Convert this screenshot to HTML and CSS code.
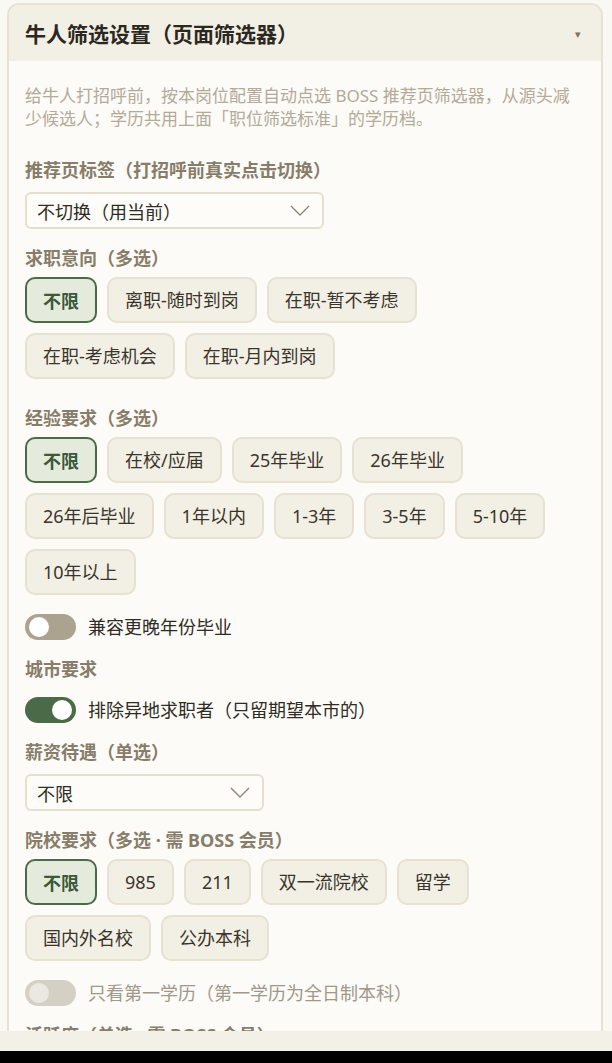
FILE: index.html
```html
<!DOCTYPE html>
<html lang="zh-CN">
<head>
<meta charset="utf-8">
<title>牛人筛选设置</title>
<link rel="stylesheet" href="styles.css">
</head>
<body>
<div class="panel">
  <div class="panel-head">
    <h2 class="panel-title">牛人筛选设置（页面筛选器）</h2>
    <span class="caret">▾</span>
  </div>
  <div class="panel-body">
    <p class="desc">给牛人打招呼前，按本岗位配置自动点选 BOSS 推荐页筛选器，从源头减少候选人；学历共用上面「职位筛选标准」的学历档。</p>

    <div class="field">
      <div class="label">推荐页标签（打招呼前真实点击切换）</div>
      <div class="select select-lg">
        <span>不切换（用当前）</span>
        <svg class="chev" viewBox="0 0 20 11" width="20" height="11"><polyline points="1,1 10,10 19,1" fill="none" stroke="#8d877b" stroke-width="1.4"/></svg>
      </div>
    </div>

    <div class="field">
      <div class="label">求职意向（多选）</div>
      <div class="chips">
        <span class="chip on">不限</span>
        <span class="chip">离职-随时到岗</span>
        <span class="chip">在职-暂不考虑</span>
        <span class="chip">在职-考虑机会</span>
        <span class="chip">在职-月内到岗</span>
      </div>
    </div>

    <div class="field">
      <div class="label">经验要求（多选）</div>
      <div class="chips">
        <span class="chip on">不限</span>
        <span class="chip">在校/应届</span>
        <span class="chip">25年毕业</span>
        <span class="chip">26年毕业</span>
        <span class="chip">26年后毕业</span>
        <span class="chip">1年以内</span>
        <span class="chip">1-3年</span>
        <span class="chip">3-5年</span>
        <span class="chip">5-10年</span>
        <span class="chip">10年以上</span>
      </div>
      <div class="toggle-row after-chips">
        <span class="toggle off"><span class="knob"></span></span>
        <span class="toggle-text">兼容更晚年份毕业</span>
      </div>
    </div>

    <div class="field">
      <div class="label">城市要求</div>
      <div class="toggle-row">
        <span class="toggle on"><span class="knob"></span></span>
        <span class="toggle-text">排除异地求职者（只留期望本市的）</span>
      </div>
    </div>

    <div class="field">
      <div class="label">薪资待遇（单选）</div>
      <div class="select select-sm">
        <span>不限</span>
        <svg class="chev" viewBox="0 0 20 11" width="20" height="11"><polyline points="1,1 10,10 19,1" fill="none" stroke="#8d877b" stroke-width="1.4"/></svg>
      </div>
    </div>

    <div class="field">
      <div class="label">院校要求（多选 · 需 BOSS 会员）</div>
      <div class="chips">
        <span class="chip on">不限</span>
        <span class="chip">985</span>
        <span class="chip">211</span>
        <span class="chip">双一流院校</span>
        <span class="chip">留学</span>
        <span class="chip">国内外名校</span>
        <span class="chip">公办本科</span>
      </div>
      <div class="toggle-row after-chips">
        <span class="toggle disabled"><span class="knob"></span></span>
        <span class="toggle-text muted">只看第一学历（第一学历为全日制本科）</span>
      </div>
    </div>

    <div class="field">
      <div class="label">活跃度（单选 · 需 BOSS 会员）</div>
      <div class="select select-sm">
        <span>不限</span>
        <svg class="chev" viewBox="0 0 20 11" width="20" height="11"><polyline points="1,1 10,10 19,1" fill="none" stroke="#8d877b" stroke-width="1.4"/></svg>
      </div>
    </div>
  </div>
</div>
<div class="footer-bar"><div class="footer-black"></div></div>
</body>
</html>
```

FILE: styles.css
```css
html, body {
  margin: 0;
  padding: 0;
}
body {
  background: #faf8f2;
  font-family: "Noto Sans", "Noto Sans CJK SC", sans-serif;
  color: #2f2b25;
  height: 1063px;
  overflow: hidden;
}
.panel {
  margin: 3px 9px 0 7px;
  border: 2px solid #e7e2d3;
  border-radius: 12px;
  background: #fcfbf7;
  overflow: hidden;
}
.panel-head {
  height: 56px;
  background: #f2efe4;
  display: flex;
  align-items: center;
  justify-content: space-between;
  padding: 0 20px 0 16px;
}
.panel-title {
  margin: 0;
  font-size: 21px;
  font-weight: 700;
  color: #2b2821;
  line-height: 28px;
  font-family: "Noto Sans CJK SC", sans-serif;
}
.caret {
  font-size: 11px;
  color: #7a7262;
  line-height: 1;
}
.panel-body {
  padding: 23px 16px 40px 16px;
  display: flex;
  flex-direction: column;
}
.desc {
  margin: 0 0 11px 0;
  font-size: 17px;
  line-height: 23px;
  color: #b3aa99;
}
.field {
  margin-top: 17px;
  display: flex;
  flex-direction: column;
  align-items: flex-start;
  padding-right: 12px;
}
.label {
  font-size: 18px;
  line-height: 24px;
  font-weight: 700;
  color: #877d6a;
}
.select {
  margin-top: 10px;
  height: 37px;
  box-sizing: border-box;
  border: 2px solid #e5dfce;
  border-radius: 6px;
  background: #fdfcf9;
  display: flex;
  align-items: center;
  justify-content: space-between;
  padding: 0 12px 0 10px;
  font-size: 18px;
  color: #2f2b25;
}
.select-lg { width: 299px; }
.select-sm { width: 239px; }
.chev { display: block; }
.chips {
  margin-top: 7px;
  margin-bottom: 10px;
  display: flex;
  flex-wrap: wrap;
  gap: 10px;
}
.chip {
  display: inline-block;
  box-sizing: border-box;
  height: 46px;
  padding: 9px 16px;
  border: 2px solid #e6e1d1;
  border-radius: 10px;
  background: #f2efe5;
  font-size: 18px;
  line-height: 24px;
  color: #3a352c;
}
.chip.on {
  background: #e5ebdc;
  border-color: #4b6a47;
  color: #3c5839;
  font-weight: 700;
  font-family: "Noto Sans CJK SC", sans-serif;
}
.toggle-row {
  margin-top: 16px;
  display: flex;
  align-items: center;
  height: 26px;
  gap: 12px;
}
.toggle-row.after-chips {
  margin-top: 9px;
}
.toggle {
  position: relative;
  width: 51px;
  height: 26px;
  border-radius: 13px;
  background: #aba290;
  flex: none;
}
.toggle .knob {
  position: absolute;
  top: 3px;
  left: 4px;
  width: 20px;
  height: 20px;
  border-radius: 50%;
  background: #ffffff;
}
.toggle.on { background: #4b6a47; }
.toggle.on .knob { left: 27px; }
.toggle.disabled { background: #d5d0c5; }
.toggle.disabled .knob { background: #ebe8e1; }
.toggle-text {
  font-size: 18px;
  line-height: 26px;
  color: #2f2b25;
}
.toggle-text.muted { color: #9f988b; }
.footer-bar {
  position: fixed;
  left: 0;
  right: 0;
  bottom: 0;
  height: 32px;
  background: #f3f0e7;
  display: flex;
  flex-direction: column;
  justify-content: flex-end;
}
.footer-black {
  height: 12px;
  background: #000;
}
```
